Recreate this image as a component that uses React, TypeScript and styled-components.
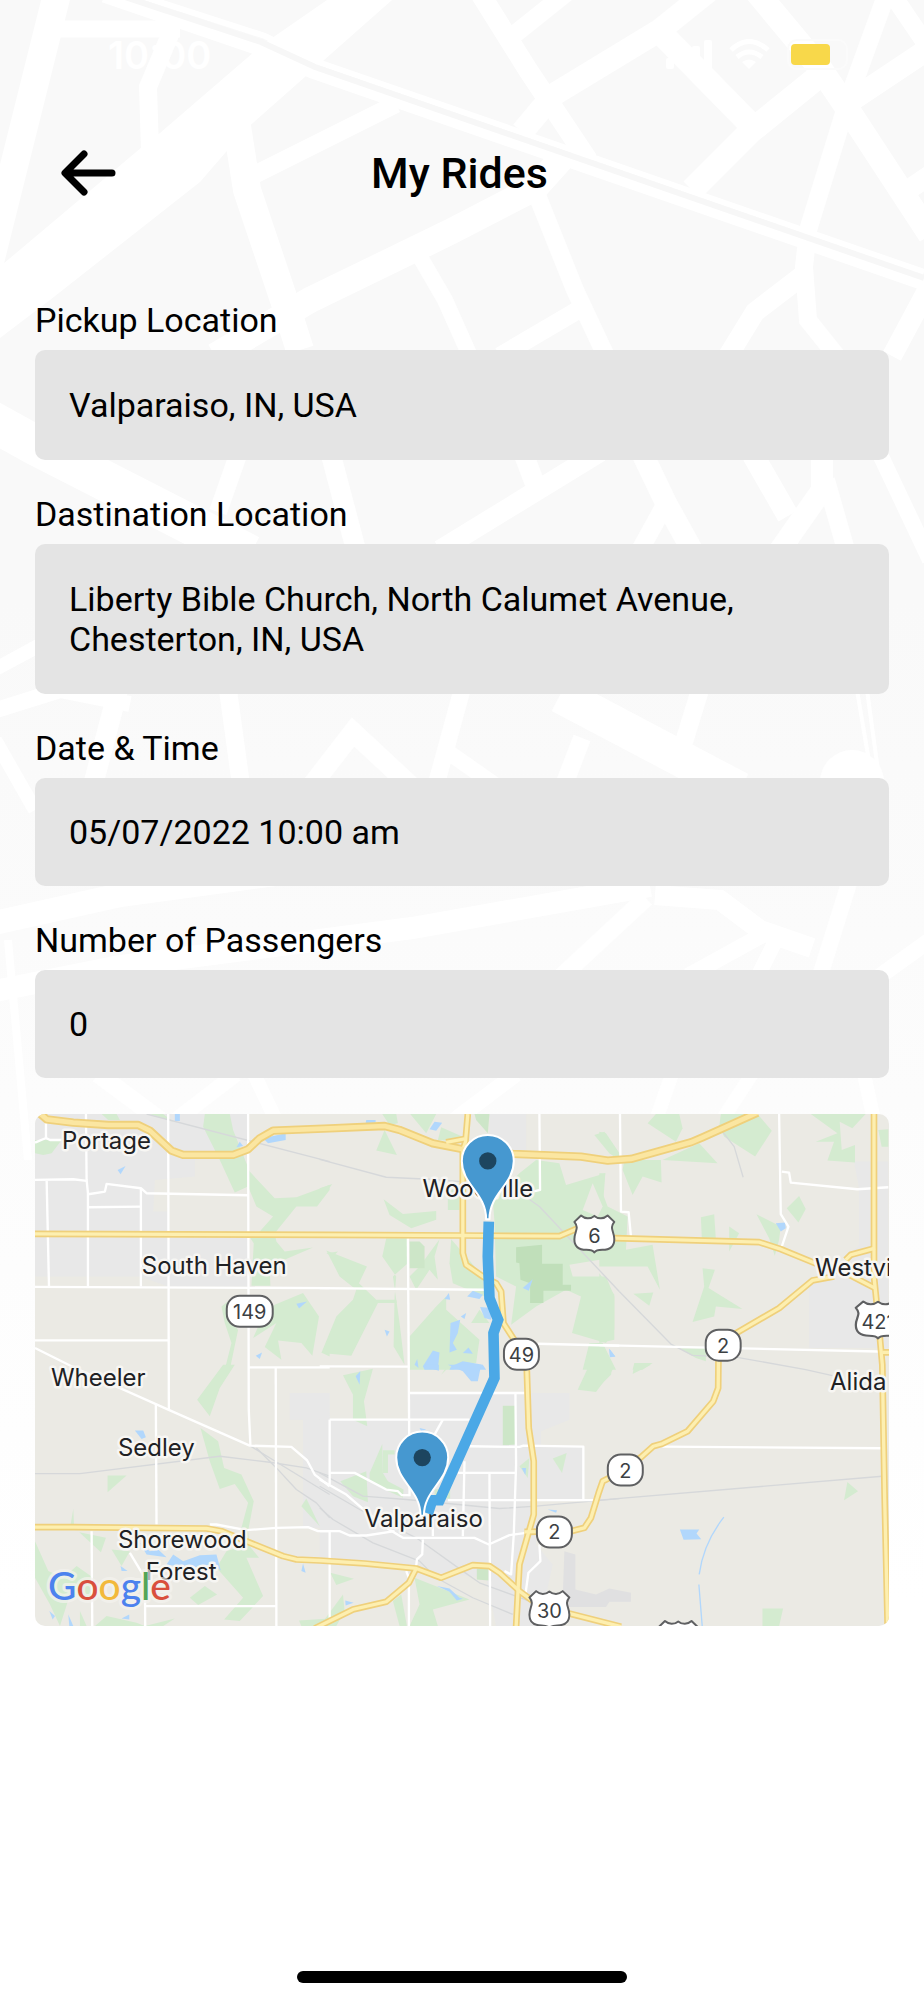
import React from "react";
import styled, { createGlobalStyle } from "styled-components";

const GlobalStyle = createGlobalStyle`
  *, *::before, *::after { box-sizing: border-box; }
  body { margin: 0; background: #fff; color: #000; font-family: Roboto, "Liberation Sans", sans-serif; }
`;

const Screen = styled.div`
  position: relative;
  isolation: isolate;
  display: flex;
  flex-direction: column;
  min-height: 100vh;
  overflow: hidden;
`;

const Backdrop = styled.svg`
  position: absolute;
  inset: 0;
  z-index: -1;
  width: 100%;
  height: 100%;
`;

const StatusBar = styled.div`
  display: flex;
  align-items: center;
  justify-content: space-between;
  height: 110px;
  padding: 0 72px 0 108px;
`;

const Clock = styled.span`
  color: #fff;
  font: 600 38px/40px Inter, sans-serif;
`;

const StatusIcons = styled.svg`
  display: block;
  width: 188px;
  height: 32px;
`;

const Header = styled.header`
  display: grid;
  grid-template-columns: 1fr auto 1fr;
  align-items: center;
  padding: 35px 60px 0;
`;

const BackButton = styled.button`
  display: flex;
  align-items: center;
  justify-self: start;
  width: 60px;
  height: 56px;
  padding: 0;
  border: 0;
  background: none;
  cursor: pointer;
`;

const Title = styled.h1`
  margin: 0;
  padding-right: 5px;
  font-size: 43px;
  font-weight: 500;
  line-height: 56px;
`;

const RideForm = styled.form`
  display: flex;
  flex-direction: column;
  gap: 34px;
  padding: 99px 35px 36px;
`;

const Field = styled.div`
  display: flex;
  flex-direction: column;
  gap: 10px;
`;

const FieldLabel = styled.label`
  font-size: 34px;
  line-height: 40px;
`;

const boxStyle = `
  display: block;
  width: 100%;
  border: 0;
  border-radius: 10px;
  background: #e4e4e4;
  color: #000;
  font-family: inherit;
  font-size: 34px;
  line-height: 40px;
  outline: none;
`;

const TextBox = styled.input<{ $tall?: boolean }>`
  ${boxStyle}
  height: ${(p) => (p.$tall ? 110 : 108)}px;
  padding: 0 34px;
`;

const AddressBox = styled.textarea`
  ${boxStyle}
  padding: 35px 34px;
  resize: none;
  overflow: hidden;
`;

const MapCard = styled.section`
  margin: 0 35px;
  border-radius: 10px;
  overflow: hidden;
`;

const MapDrawing = styled.svg`
  display: block;
  width: 100%;
  height: auto;
`;

const PlaceName = styled.text`
  font: 400 24px Inter, sans-serif;
  fill: #202124;
  stroke: #f7f6f3;
  stroke-width: 5px;
  stroke-linejoin: round;
  paint-order: stroke;
`;

const RouteNumber = styled.text`
  font: 400 20px Inter, sans-serif;
  fill: #3c4043;
  text-anchor: middle;
`;

const Brand = styled.text`
  font: 500 39px Lato, sans-serif;
  stroke: #f4f3ef;
  stroke-opacity: 0.7;
  stroke-width: 6px;
  stroke-linejoin: round;
  paint-order: stroke;
`;

const Footer = styled.footer`
  display: flex;
  justify-content: center;
  margin-top: auto;
  padding: 40px 0 17px;
`;

const HomeIndicator = styled.div`
  width: 330px;
  height: 12px;
  border-radius: 6px;
  background: #000;
`;

/* Streets of the pale backdrop: [width, points] */
const streets: [number, string][] = [
  [28, "58,-10 3,210 -35,362"],
  [17, "50,29 180,29"],
  [18, "172,30 148,87 150,150"],
  [28, "236,120 247,190 284,300 300,350"],
  [18, "240,182 396,104"],
  [6, "141,-4 265,36 318,62 924,272"],
  [13, "104,-4 256,48 312,72 924,284"],
  [20, "478,-10 528,70 588,160"],
  [18, "570,-10 510,38"],
  [23, "710,-10 660,30 553,95 522,132"],
  [24, "660,32 752,126"],
  [24, "824,72 750,132 692,190"],
  [24, "755,-10 820,68 845,105 930,235"],
  [18, "888,-10 848,100 808,230 804,267 808,320 840,360"],
  [18, "892,-6 930,50"],
  [22, "930,48 846,104"],
  [20, "802,276 755,312 728,356"],
  [20, "930,175 905,192"],
  [20, "930,285 892,356"],
  [26, "562,158 535,188 450,232 310,300 215,356"],
  [18, "535,190 575,290 606,356"],
  [16, "416,250 445,300 470,356"],
  [18, "585,306 500,356"],
  [40, "-10,420 35,445 250,555"],
  [18, "238,455 218,512"],
  [20, "331,455 356,550"],
  [20, "524,455 538,492"],
  [20, "600,452 440,550"],
  [22, "643,455 666,503 692,550"],
  [18, "666,503 640,550"],
  [22, "753,455 788,516"],
  [22, "822,450 822,490 780,550"],
  [18, "826,480 846,550"],
  [16, "878,450 930,560"],
  [14, "-10,672 40,645"],
  [16, "-10,712 60,690 130,704"],
  [20, "118,690 93,785"],
  [18, "228,690 241,785"],
  [20, "312,785 353,732 410,785"],
  [17, "462,690 436,785"],
  [16, "448,752 495,785"],
  [36, "560,695 740,790"],
  [18, "582,738 564,785"],
  [18, "700,690 684,742"],
  [4, "857,690 873,785"],
  [4, "867,690 880,785"],
  [14, "-5,740 35,810"],
  [24, "-10,924 120,895 290,872"],
  [22, "-10,992 120,966 412,928 650,886"],
  [18, "646,898 562,976"],
  [20, "655,895 720,900 760,930 812,948"],
  [16, "768,932 688,976"],
  [15, "778,936 758,976"],
  [16, "850,880 820,976"],
  [16, "930,940 880,976"],
  [8, "8,940 28,1160"],
  [18, "98,1074 160,1120"],
  [16, "236,1074 176,1120"],
  [14, "254,1074 276,1120"],
  [16, "516,1074 455,1120"],
  [14, "672,1074 656,1120"],
  [14, "752,1074 722,1120"],
  [14, "864,1074 874,1120"],
];

type Tile = { x: number; y: number; shapes: string[] };

const NW = { x: -15, y: -12 };
const N = { x: 855, y: -12 };
const NE = { x: 1695, y: -12 };
const SW = { x: -15, y: 753 };
const S = { x: 855, y: 753 };
const SE = { x: 1695, y: 753 };

const towns: Tile[] = [
  { ...NW, shapes: ["15,12 655,12 655,120 495,150 495,200 375,210 370,305 415,305 415,375 655,375 655,530 415,530 330,500 15,500"] },
  { ...N, shapes: ["510,12 620,12 620,120 580,150 510,90"] },
  { ...NE, shapes: ["765,155 868,155 868,715 630,715 630,510 700,500 780,405 780,235"] },
  { ...SW, shapes: ["780,85 900,85 900,490 820,490 820,165 780,165"] },
  { ...S, shapes: ["0,85 25,85 30,165 270,165 270,85 750,85 750,165 665,200 665,245 790,245 790,405 650,405 650,540 700,600 660,785 530,785 500,640 300,620 0,590"] },
];

const airport: Tile[] = [
  { ...S, shapes: ["735,560 768,570 768,675 830,690 870,672 935,685 935,712 870,712 860,728 750,728 730,700"] },
];

const parks: Tile[] = [
  { ...NW, shapes: [
    "15,90 95,90 65,130 40,135 15,130", "215,12 260,12 270,30 235,30", "360,12 400,12 430,35",
    "525,12 600,12 610,60 660,185 735,265 800,262 900,225 900,240 862,290 800,290 735,370 740,395 765,425 850,413 740,460 720,480 722,528 665,528 672,400 662,385 690,365 730,320 680,290 655,230 615,248 570,150 520,50",
    "575,590 600,570 590,625 625,660 600,780 585,780 605,700 585,640",
    "670,685 690,640 735,585 820,550 868,620 848,738 815,700 745,692 755,750 705,712 740,640",
    "878,730 900,690 900,740", "890,430 925,425 910,440",
  ] },
  { ...N, shapes: [
    "188,12 230,12 235,40 210,45", "272,12 350,12 320,70", "195,60 232,135 170,122", "365,52 430,80 430,95 355,90",
    "0,235 38,222 0,275", "192,268 250,312 350,303 350,330 275,355 210,315",
    "20,422 142,470 118,520 170,570 230,570 232,580 175,580 95,738 5,730 50,620 100,570 110,540 60,500",
    "200,385 265,385 265,460 220,500 240,640 255,765 222,710 225,560 230,500 188,440",
    "300,470 360,388 345,440 355,510 330,480 290,540 270,500",
    "395,388 440,440 490,500 495,560 400,520 390,460",
    "520,270 600,190 650,150 720,160 740,225 858,190 850,300 900,330 900,440 750,465 760,500 860,500 885,560 885,660 860,700 758,670 785,560 740,540 650,590 575,645 590,530 530,500 525,335",
    "825,75 855,65 900,130 900,150 870,130", "270,680 350,590 380,560 380,600 480,690 470,760 400,780 270,780",
    "385,250 420,220 420,300 385,300", "790,780 810,700 850,700 890,780", "455,640 480,600 510,640",
  ] },
  { ...NE, shapes: [
    "0,190 18,190 10,250 25,290 85,320 80,420 160,405 182,540 145,470 0,470", "0,490 45,555 45,690 0,700",
    "145,40 170,12 240,12 250,55 230,95", "365,12 475,12 518,62 468,140 375,80 360,50", "190,150 300,100 355,160",
    "75,150 185,150 187,218 130,200 100,255 70,180", "0,65 20,70 60,130 0,90",
    "635,12 800,12 760,55 722,35 728,120 768,105 768,158 685,152 705,95 650,95 715,70",
    "838,60 868,58 868,110 848,110", "600,258 620,297 598,338 563,295", "472,313 545,350 540,390 527,438 510,385",
    "305,322 345,313 350,388 308,388", "390,350 420,370 390,425",
    "310,475 347,480 328,535 430,598 350,590 345,620 280,637 315,530", "102,552 162,548 150,588",
    "105,760 160,760 130,780 100,780", "240,716 320,716 320,755 290,745",
  ] },
  { ...SW, shapes: [
    "580,0 615,0 570,70 540,155 502,105",
    "512,190 565,230 583,310 635,330 672,410 655,500 660,545 688,580 650,580 700,695 630,770 583,765 640,700 560,610 590,560 650,540 635,490 655,415 615,358 570,373 540,290",
    "233,333 290,333 233,383", "130,433 132,480 122,480", "148,503 228,520 213,563", "245,555 300,560 275,605",
    "480,700 525,665 562,690 505,722", "15,530 55,620 100,640 140,605 190,640 190,700 120,690 90,785 60,720 15,640",
    "195,785 230,755 320,775 345,785", "345,785 435,762 400,785", "830,402 870,485 815,425", "808,768 900,762 880,785 815,785", "150,740 170,785 150,785",
  ] },
  { ...S, shapes: [
    "70,32 160,12 133,110 143,185 100,165 100,90", "775,75 810,0 880,0 880,15 830,82",
    "600,305 630,280 625,340", "700,282 742,265 728,325", "62,350 140,320 145,413 100,395",
    "150,325 188,238 190,325 205,350 252,375 250,400 185,370 150,345", "190,257 225,257 225,270 205,270 205,325 190,325",
    "345,375 392,370 392,402 345,402", "32,625 103,643 50,662", "0,785 70,690 75,740 50,785",
    "285,640 450,705 340,735 355,785 270,785 300,720", "220,710 245,690 262,785 240,785", "365,30 385,0 395,0",
  ] },
  { ...SE, shapes: ["0,0 40,0 35,30 0,65", "105,0 155,0 100,28", "745,352 777,380 735,407", "490,732 552,732 540,785 490,785"] },
];

const clearings: Tile[] = [{ ...N, shapes: ["790,300 820,220 850,290 835,320"] }];

const woods: Tile[] = [
  { ...N, shapes: ["590,412 668,405 668,462 730,462 730,525 755,525 755,543 672,543 672,580 632,580 632,520 603,510 600,460 590,458"] },
];

const groves: Tile[] = [
  { ...N, shapes: ["270,395 300,395 315,410 315,475 270,475", "465,12 510,12 505,70 470,30"] },
  { ...S, shapes: ["550,123 588,123 588,240 550,242", "472,612 507,612 507,648 472,645"] },
];

const lakes: Tile[] = [
  { ...NW, shapes: ["435,12 450,12 450,33 435,33", "263,180 287,168 272,193", "700,85 768,70 768,90 715,100", "620,112 630,95 640,108", "800,582 832,575 808,596", "678,738 697,728 690,748"] },
  { ...N, shapes: [
    "140,30 168,30 168,38 138,40", "330,58 345,35 368,38 350,62", "610,535 640,508 628,543", "375,568 388,550 392,570",
    "443,560 460,543 490,555 480,568", "482,592 515,595 515,630 495,625", "393,640 422,630 415,670 400,700 412,720 390,728",
    "195,660 210,665 202,680", "430,730 447,713 460,732", "310,770 340,722 360,728 355,780 315,780",
    "395,770 430,755 490,765 500,780 390,780", "870,718 888,740 872,742", "424,620 440,610 435,628", "285,765 293,748 297,775",
  ] },
  { ...NE, shapes: ["530,340 558,338 560,355 545,365", "30,717 48,740 32,743"] },
  { ...SW, shapes: [
    "315,198 340,198 348,218 335,223", "330,535 360,560 385,555 410,578 350,570", "430,570 460,590 510,572 560,570 573,618 550,600 480,612 410,600",
    "815,620 820,597 828,625", "272,605 293,620 275,620", "275,762 298,750 298,765", "58,740 75,755 68,765", "115,750 130,785 118,785",
  ] },
  { ...S, shapes: [
    "385,0 485,0 475,50 455,50 430,20", "315,0 358,0 358,18 330,10", "300,190 320,195 305,200", "108,35 122,20 120,60",
    "607,310 620,310 618,332", "685,435 713,437 710,445", "352,665 390,672 420,700 430,703 412,708 390,682", "77,708 102,715 78,723",
  ] },
  { ...SE, shapes: ["242,495 300,495 292,507 306,524 253,526"] },
];

const rails: Tile[] = [
  { ...NW, shapes: ["350,12 900,155"] },
  { ...N, shapes: ["0,148 200,202 330,208 425,215", "625,265 660,290 900,545"] },
  { ...NE, shapes: ["60,545 215,703 280,737 410,742 620,780 700,798", "370,65 405,110 432,202"] },
  { ...SW, shapes: ["15,327 150,327 570,275 720,293 830,310 900,335", "660,243 900,390", "680,250 740,310 800,375 860,415 900,460"] },
  { ...S, shapes: ["0,325 130,395 260,405 540,432 650,425 900,402", "0,365 120,435 290,520 430,620 480,655 630,710", "0,430 40,465 160,535 300,590 350,640 460,700 580,750"] },
  { ...SE, shapes: ["0,407 850,335"] },
];

const localRoads: Tile[] = [
  { ...NW, shapes: [
    "168,12 170,210 174,250 174,530", "15,210 130,208 170,213", "415,12 417,900", "655,12 657,900 662,1008",
    "15,531 900,535", "50,213 57,530", "175,253 225,245 230,222 333,235 350,250 655,256", "175,292 333,290", "333,235 333,530",
    "15,692 415,692", "15,98 48,84 60,90 95,90", "48,84 48,20", "657,773 900,773", "738,775 740,1550",
    "15,715 135,775 415,900 660,1008 785,1012 832,1052 855,1095 900,1130",
  ] },
  { ...N, shapes: ["265,385 270,1160", "0,535 495,540", "0,770 270,771", "660,12 662,240 640,245", "655,702 900,708"] },
  { ...NE, shapes: ["62,12 65,305 88,307 95,380", "540,12 545,313 568,350 548,410", "548,185 570,188 575,218 775,238 868,232", "0,706 868,726"] },
  { ...SW, shapes: ["378,120 380,480", "185,500 187,785", "345,630 346,785", "300,565 345,640", "345,725 740,725", "540,480 560,480 650,497 740,490 835,488 865,500 900,500"] },
  { ...S, shapes: [
    "0,345 80,390 150,450 200,490 250,520 465,520 508,540 570,512 620,505", "0,500 60,500 90,513 140,513 225,500",
    "270,85 615,85", "30,165 450,165", "30,165 30,360", "370,165 345,210", "588,85 590,300 583,510 575,630 555,620",
    "450,245 600,247 612,243 792,246 792,407", "385,407 840,407", "30,325 105,325 200,375 235,380 247,392 270,392",
    "435,290 430,515", "415,325 590,325", "510,325 512,785", "340,420 340,515", "310,525 308,570 292,585 290,605",
    "260,620 268,640 268,785", "30,500 30,760", "660,540 663,590 627,625 618,690",
  ] },
  { ...SE, shapes: ["190,246 850,251"] },
];

/* Main roads, over the whole map */
const highways = [
  "0,360 885,363 1285,365 1575,367 1650,335",
  "1695,373 1740,373 2175,385 2240,406 2360,455 2440,480 2523,523",
  "2435,438 2450,423 2523,403",
  "1300,0 1293,83 1285,108 1285,418 1295,453 1345,488 1385,508 1400,533 1407,628 1450,695 1477,763 1483,943 1498,1043 1498,1203 1455,1353 1445,1540",
  "1235,85 1290,75",
  "2055,688 2115,653 2235,583 2335,500 2400,488",
  "2053,720 2052,823 2037,863 1960,953 1885,990 1857,998 1820,1031 1765,1073 1705,1103 1693,1138 1670,1213 1650,1243 1610,1253 1470,1255",
  "0,1241 115,1241 515,1245 560,1253 745,1328 785,1338 855,1341 990,1350 1145,1365 1220,1393 1315,1355 1365,1358 1395,1378 1455,1433 1500,1466",
  "1595,1498 1760,1540",
  "840,1545 955,1488 1055,1465 1123,1408 1145,1365",
  "2520,0 2520,488 2530,588 2545,753 2552,1153 2561,1540",
  "2545,716 2565,716",
];

const interstate =
  "10,-6 35,16 115,26 220,33 310,33 345,50 410,110 445,123 595,123 640,106 675,73 715,50 885,43 1050,36 1095,48 1195,88 1285,106 1435,120 1640,128 1720,140 1790,135 1970,85 2005,70 2170,-4";

function Areas({ tiles, color }: { tiles: Tile[]; color: string }) {
  return (
    <g fill={color}>
      {tiles.map((t, i) => (
        <g key={i} transform={`translate(${t.x} ${t.y})`}>
          {t.shapes.map((s) => <polygon key={s} points={s} />)}
        </g>
      ))}
    </g>
  );
}

function Lines({ tiles, color, width }: { tiles: Tile[]; color: string; width: number }) {
  return (
    <g fill="none" stroke={color} strokeWidth={width} strokeLinejoin="round">
      {tiles.map((t, i) => (
        <g key={i} transform={`translate(${t.x} ${t.y})`}>
          {t.shapes.map((s) => <polyline key={s} points={s} />)}
        </g>
      ))}
    </g>
  );
}

function Pin({ x, y }: { x: number; y: number }) {
  return (
    <g transform={`translate(${x} ${y})`}>
      <path d="M-5 175 C-5 96 -78 72 -78 0 A78 78 0 0 1 78 0 C78 72 5 96 5 175 Z" fill="#4698d0" stroke="#fff" strokeWidth="6" strokeLinejoin="round" />
      <circle r="26" fill="#1d455f" />
    </g>
  );
}

function StateRoute({ x, y, label }: { x: number; y: number; label: string }) {
  const w = label.length > 2 ? 46 : 35;
  return (
    <g>
      <rect x={x - w / 2} y={y - 15} width={w} height="31" rx="13" fill="#fff" stroke="#5f6062" strokeWidth="2" />
      <RouteNumber x={x} y={y + 8}>{label}</RouteNumber>
    </g>
  );
}

function UsRoute({ x, y, label, wide }: { x: number; y: number; label: string; wide?: boolean }) {
  return (
    <g>
      <path
        transform={`translate(${x} ${y}) scale(${wide ? 0.37 : 0.333} .333)`}
        d="M-40-55C-28-44-12-44 0-54C12-44 28-44 40-55L60-36C44-16 60-8 60 16C60 42 44 48 24 48C12 48 4 50 0 56C-4 50-12 48-24 48C-44 48-60 42-60 16C-60-8-44-16-60-36Z"
        fill="#fff" stroke="#5f6062" strokeWidth="6" strokeLinejoin="round"
      />
      <RouteNumber x={x} y={y + 9}>{label}</RouteNumber>
    </g>
  );
}

const places: [number, number, string][] = [
  [27, 35, "Portage"], [107, 160, "South Haven"], [388, 83, "Woodville"], [781, 162, "Westville"],
  [16, 272, "Wheeler"], [83, 342, "Sedley"], [330, 414, "Valparaiso"], [83, 435, "Shorewood"],
  [111, 467, "Forest"], [796, 276, "Alida"],
];

function RouteMap() {
  return (
    <MapDrawing viewBox="0 0 855 513" role="img" aria-label="Route from Valparaiso to Woodville">
      <rect width="855" height="513" fill="#ebeae4" />
      <g transform="scale(.33333)">
        <Areas tiles={towns} color="#e8e8e8" />
        <Areas tiles={airport} color="#e0e0e1" />
        <Areas tiles={parks} color="#d4ebd0" />
        <Areas tiles={clearings} color="#ebeae4" />
        <Areas tiles={groves} color="#cde6c8" />
        <Areas tiles={woods} color="#c0dfba" />
        <Areas tiles={lakes} color="#b1d7fc" />
        <path d="M2069 1211Q2007 1290 1995 1383M1994 1413L2004 1538" fill="none" stroke="#b1d7fc" strokeWidth="4" />
        <Lines tiles={rails} color="#d6d8da" width={4} />
        <Lines tiles={localRoads} color="#fff" width={7} />
        <g fill="none" strokeLinejoin="round">
          {highways.map((p) => <polyline key={p} points={p} stroke="#efd07b" strokeWidth="20" />)}
          <polyline points={interstate} stroke="#efd07b" strokeWidth="25" />
          {highways.map((p) => <polyline key={p} points={p} stroke="#fdefb0" strokeWidth="10" />)}
          <polyline points={interstate} stroke="#fbe6a1" strokeWidth="14" />
        </g>
      </g>
      {places.map(([x, y, name]) => <PlaceName key={name} x={x} y={y}>{name}</PlaceName>)}
      <StateRoute x={215} y={197} label="149" />
      <StateRoute x={487} y={240} label="49" />
      <StateRoute x={689} y={231} label="2" />
      <StateRoute x={591} y={356} label="2" />
      <StateRoute x={520} y={418} label="2" />
      <UsRoute x={560} y={120} label="6" />
      <UsRoute x={515} y={496} label="30" />
      <UsRoute x={844} y={206} label="421" wide />
      <UsRoute x={644} y={526} label="" />
      <g transform="scale(.33333)">
        <path d="M1363 323L1360 428L1365 553L1391 618L1377 658L1380 793L1215 1160L1193 1160L1180 1200" fill="none" stroke="#4ba8e6" strokeWidth="32" />
        <Pin x={1360} y={141} />
        <Pin x={1163} y={1032} />
      </g>
      <Brand x={13} y={487}>
        <tspan fill="#4c82ee">G</tspan><tspan fill="#d94f3d">o</tspan><tspan fill="#f2b93b">o</tspan>
        <tspan fill="#4c82ee">g</tspan><tspan fill="#54a557">l</tspan><tspan fill="#d94f3d">e</tspan>
      </Brand>
    </MapDrawing>
  );
}

export default function App() {
  return (
    <Screen>
      <GlobalStyle />
      <Backdrop viewBox="0 0 924 2000" preserveAspectRatio="xMidYMin slice" aria-hidden="true">
        <defs>
          <linearGradient id="fade" x1="0" y1="0" x2="0" y2="1">
            <stop offset="0" stopColor="#f9f9f9" />
            <stop offset="0.3" stopColor="#f9f9f9" />
            <stop offset="0.8" stopColor="#fff" />
          </linearGradient>
        </defs>
        <rect width="924" height="2000" fill="url(#fade)" />
        <g fill="none" stroke="#fff">
          {streets.map(([w, p]) => <polyline key={p} points={p} strokeWidth={w} />)}
        </g>
        <polygon points="327,0 392,0 245,130 200,182 50,300 0,338 -10,275 142,147 160,133 262,45" fill="#fff" />
        <polyline points="122,-4 261,42 315,67 924,278" fill="none" stroke="#f7f7f7" strokeWidth="6" />
        <circle cx="852" cy="782" r="32" fill="#fff" />
      </Backdrop>
      <StatusBar>
        <Clock>10:00</Clock>
        <StatusIcons viewBox="664 39 188 32" aria-hidden="true">
          <g fill="#fff">
            <rect x="666" y="58" width="8" height="11" rx="2" />
            <rect x="679" y="52" width="8" height="17" rx="2" />
            <rect x="692" y="46" width="8" height="23" rx="2" />
            <rect x="704" y="40" width="8" height="29" rx="2" />
            <path d="M749 69L742 62Q749 57 756 62Z" />
          </g>
          <g fill="none" stroke="#fff" strokeWidth="5">
            <path d="M731 50Q749 33 768 50" />
            <path d="M737 57Q749 47 762 57" />
          </g>
          <rect x="788" y="40" width="59" height="29" rx="9" fill="none" stroke="#fbfbfb" strokeWidth="2" />
          <rect x="791" y="44" width="39" height="21" rx="4" fill="#f8d84a" />
        </StatusIcons>
      </StatusBar>
      <Header>
        <BackButton type="button" aria-label="Back">
          <svg width="60" height="56" viewBox="0 0 60 56" fill="none" stroke="#000" strokeWidth="7" strokeLinecap="round" strokeLinejoin="round" aria-hidden="true">
            <path d="M52 28H6M24 9L5 28L24 47" />
          </svg>
        </BackButton>
        <Title>My Rides</Title>
      </Header>
      <RideForm>
        <Field>
          <FieldLabel htmlFor="pickup">Pickup Location</FieldLabel>
          <TextBox id="pickup" $tall readOnly value="Valparaiso, IN, USA" />
        </Field>
        <Field>
          <FieldLabel htmlFor="destination">Dastination Location</FieldLabel>
          <AddressBox id="destination" rows={2} readOnly value="Liberty Bible Church, North Calumet Avenue, Chesterton, IN, USA" />
        </Field>
        <Field>
          <FieldLabel htmlFor="when">Date &amp; Time</FieldLabel>
          <TextBox id="when" readOnly value="05/07/2022 10:00 am" />
        </Field>
        <Field>
          <FieldLabel htmlFor="passengers">Number of Passengers</FieldLabel>
          <TextBox id="passengers" readOnly value="0" />
        </Field>
      </RideForm>
      <MapCard>
        <RouteMap />
      </MapCard>
      <Footer>
        <HomeIndicator />
      </Footer>
    </Screen>
  );
}
